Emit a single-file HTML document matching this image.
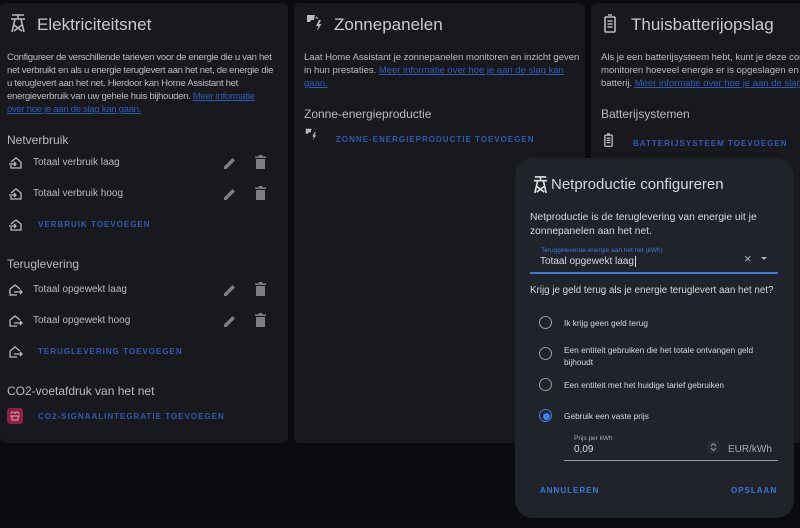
<!DOCTYPE html>
<html><head><meta charset="utf-8">
<style>
*{margin:0;padding:0;box-sizing:border-box}
body{width:800px;height:528px;background:#0a0b0e;font-family:"Liberation Sans",sans-serif;position:relative;overflow:hidden;color:#c4c6ca}
.card{position:absolute;top:3px;height:440px;background:#18191d;border-radius:6px;overflow:hidden}
.abs{position:absolute}
.h{font-size:17px;color:#c9cbcf;white-space:nowrap}
.p{font-size:9.6px;line-height:13px;color:#b9bbbf;letter-spacing:-0.05px}
a{color:#2f5ab8;text-decoration:underline}
.sec{font-size:12px;color:#b9bbbf;white-space:nowrap}
.item{font-size:10px;color:#b9bbbf;white-space:nowrap}
.btn{font-size:8px;font-weight:bold;letter-spacing:1px;color:#2f5ab8;white-space:nowrap}
svg{position:absolute}
.dlg{position:absolute;left:515px;top:158px;width:279px;height:360px;background:#202329;border-radius:18px}
.d{color:#d6d8dc}
.radio{position:absolute;left:24px;width:13px;height:13px;border:1.5px solid #9a9ca0;border-radius:50%}
</style></head><body>

<!-- Card 1 -->
<div class="card" style="left:0;width:288px">
  <svg style="left:9px;top:10px" width="18" height="20" viewBox="0 0 18 20" fill="none" stroke="#b9bbbf" stroke-width="1.6"><path d="M3 2h12M2 6h14M9 2v4M6 6L3 19M12 6l3 13M5 12l8 6M13 12l-8 6"/></svg>
  <div class="abs h" style="left:37px;top:12px">Elektriciteitsnet</div>
  <div class="abs p" style="left:7px;top:48px;width:285px;white-space:nowrap;letter-spacing:-0.32px">Configureer de verschillende tarieven voor de energie die u van het<br>net verbruikt en als u energie teruglevert aan het net, de energie die<br>u teruglevert aan het net. Hierdoor kan Home Assistant het<br>energieverbruik van uw gehele huis bijhouden. <a>Meer informatie</a><br><a>over hoe je aan de slag kan gaan.</a></div>
  <div class="abs sec" style="left:7px;top:130px">Netverbruik</div>
</div>
<!-- Card 2 -->
<div class="card" style="left:294px;width:291px">
  <div class="abs h" style="left:40px;top:12px">Zonnepanelen</div>
  <div class="abs p" style="left:10px;top:48px;width:278px">Laat Home Assistant je zonnepanelen monitoren en inzicht geven in hun prestaties. <a>Meer informatie over hoe je aan de slag kan gaan.</a></div>
  <div class="abs sec" style="left:10px;top:104px">Zonne-energieproductie</div>
  <div class="abs btn" style="left:42px;top:132px">ZONNE-ENERGIEPRODUCTIE TOEVOEGEN</div>
</div>
<!-- Card 3 -->
<div class="card" style="left:591px;width:209px;border-radius:6px 0 0 6px">
  <div class="abs h" style="left:40px;top:12px">Thuisbatterijopslag</div>
  <div class="abs p" style="left:10px;top:48px;width:260px;white-space:nowrap">Als je een batterijsysteem hebt, kunt je deze configureren om te<br>monitoren hoeveel energie er is opgeslagen en gebruikt uit je<br>batterij. <a>Meer informatie over hoe je aan de slag kan gaan.</a></div>
  <div class="abs sec" style="left:10px;top:104px">Batterijsystemen</div>
  <div class="abs btn" style="left:42px;top:136px">BATTERIJSYSTEEM TOEVOEGEN</div>
</div>

<!-- solar icons -->
<svg style="left:306px;top:14px" width="18" height="18" viewBox="0 0 18 18"><path d="M1 1h8l-1 5H5l-1 2H1z" fill="#b9bbbf"/><path d="M10 3l1.5 1.5" stroke="#b9bbbf" stroke-width="1.4"/><path d="M13 6l-3 6h2.5l-1.5 5 4.5-7h-2.5l2-4z" fill="#b9bbbf"/></svg>
<svg style="left:305px;top:128px" width="13" height="13" viewBox="0 0 18 18"><path d="M1 1h8l-1 5H5l-1 2H1z" fill="#b9bbbf"/><path d="M13 6l-3 6h2.5l-1.5 5 4.5-7h-2.5l2-4z" fill="#b9bbbf"/></svg>
<!-- battery icons -->
<svg style="left:604px;top:14px" width="12" height="19" viewBox="0 0 12 19" fill="none" stroke="#b9bbbf" stroke-width="1.6"><rect x="1" y="3" width="10" height="15" rx="1"/><path d="M4 1h4M3.5 7h5M3.5 10h5M3.5 13h5"/></svg>
<svg style="left:604px;top:133px" width="9" height="14" viewBox="0 0 12 19" fill="none" stroke="#b9bbbf" stroke-width="1.8"><rect x="1" y="3" width="10" height="15" rx="1"/><path d="M4 1h4M3.5 7h5M3.5 10h5M3.5 13h5"/></svg>

<!-- Netverbruik items -->
<svg style="left:8px;top:156px" width="14" height="14" viewBox="0 0 14 14" fill="none" stroke="#b9bbbf" stroke-width="1.3"><path d="M3 6L8 2l5 4v6H3V9M1 8h7M6 6l2 2-2 2"/></svg>
<div class="abs item" style="left:33px;top:157px">Totaal verbruik laag</div>
<svg style="left:8px;top:187px" width="14" height="14" viewBox="0 0 14 14" fill="none" stroke="#b9bbbf" stroke-width="1.3"><path d="M3 6L8 2l5 4v6H3V9M1 8h7M6 6l2 2-2 2"/></svg>
<div class="abs item" style="left:33px;top:188px">Totaal verbruik hoog</div>
<svg style="left:8px;top:218px" width="14" height="14" viewBox="0 0 14 14" fill="none" stroke="#b9bbbf" stroke-width="1.3"><path d="M3 6L8 2l5 4v6H3V9M1 8h7M6 6l2 2-2 2"/></svg>
<div class="abs btn" style="left:38px;top:220px">VERBRUIK TOEVOEGEN</div>

<div class="abs sec" style="left:7px;top:257px">Teruglevering</div>
<svg style="left:8px;top:283px" width="15" height="14" viewBox="0 0 15 14" fill="none" stroke="#b9bbbf" stroke-width="1.3"><path d="M2 6l5-4 5 4M2 6v6h7M6 9h8M12 7l2 2-2 2"/></svg>
<div class="abs item" style="left:33px;top:284px">Totaal opgewekt laag</div>
<svg style="left:8px;top:314px" width="15" height="14" viewBox="0 0 15 14" fill="none" stroke="#b9bbbf" stroke-width="1.3"><path d="M2 6l5-4 5 4M2 6v6h7M6 9h8M12 7l2 2-2 2"/></svg>
<div class="abs item" style="left:33px;top:315px">Totaal opgewekt hoog</div>
<svg style="left:8px;top:345px" width="15" height="14" viewBox="0 0 15 14" fill="none" stroke="#b9bbbf" stroke-width="1.3"><path d="M2 6l5-4 5 4M2 6v6h7M6 9h8M12 7l2 2-2 2"/></svg>
<div class="abs btn" style="left:38px;top:347px">TERUGLEVERING TOEVOEGEN</div>

<div class="abs sec" style="left:7px;top:384px">CO2-voetafdruk van het net</div>
<div class="abs" style="left:7px;top:408px;width:16px;height:16px;border-radius:3px;background:#8a2044"></div>
<svg style="left:9px;top:411px" width="12" height="10" viewBox="0 0 12 10" fill="none" stroke="#e8a0b0" stroke-width="1"><path d="M2 3a2 2 0 0 1 4 0a2 2 0 0 1 4 0M1 5h10M3 5v4h6V5"/></svg>
<div class="abs btn" style="left:38px;top:412px">CO2-SIGNAALINTEGRATIE TOEVOEGEN</div>

<!-- edit/delete icons -->
<svg style="left:223px;top:156px" width="14" height="14" viewBox="0 0 14 14"><path d="M1 10.5L9.5 2 12 4.5 3.5 13H1z" fill="#7c7e82"/></svg>
<svg style="left:255px;top:155px" width="11" height="14" viewBox="0 0 11 14"><path d="M0 1.5h11V3H0zM3.5 0h4v2h-4zM1 4h9v10H1z" fill="#7c7e82"/></svg>
<svg style="left:223px;top:187px" width="14" height="14" viewBox="0 0 14 14"><path d="M1 10.5L9.5 2 12 4.5 3.5 13H1z" fill="#7c7e82"/></svg>
<svg style="left:255px;top:186px" width="11" height="14" viewBox="0 0 11 14"><path d="M0 1.5h11V3H0zM3.5 0h4v2h-4zM1 4h9v10H1z" fill="#7c7e82"/></svg>
<svg style="left:223px;top:283px" width="14" height="14" viewBox="0 0 14 14"><path d="M1 10.5L9.5 2 12 4.5 3.5 13H1z" fill="#7c7e82"/></svg>
<svg style="left:255px;top:282px" width="11" height="14" viewBox="0 0 11 14"><path d="M0 1.5h11V3H0zM3.5 0h4v2h-4zM1 4h9v10H1z" fill="#7c7e82"/></svg>
<svg style="left:223px;top:314px" width="14" height="14" viewBox="0 0 14 14"><path d="M1 10.5L9.5 2 12 4.5 3.5 13H1z" fill="#7c7e82"/></svg>
<svg style="left:255px;top:313px" width="11" height="14" viewBox="0 0 11 14"><path d="M0 1.5h11V3H0zM3.5 0h4v2h-4zM1 4h9v10H1z" fill="#7c7e82"/></svg>

<!-- Dialog -->
<div class="dlg">
  <svg style="left:17px;top:17px" width="17" height="19" viewBox="0 0 18 20" fill="none" stroke="#e0e2e6" stroke-width="1.7"><path d="M3 2h12M2 6h14M9 2v4M6 6L3 19M12 6l3 13M5 12l8 6M13 12l-8 6"/></svg>
  <div class="abs d" style="left:36px;top:18px;font-size:15px;white-space:nowrap">Netproductie configureren</div>
  <div class="abs d" style="left:15px;top:53px;font-size:10.3px;line-height:14px;width:250px">Netproductie is de teruglevering van energie uit je zonnepanelen aan het net.</div>
  <div class="abs" style="left:26px;top:89px;font-size:6.5px;color:#3b78e0;white-space:nowrap">Teruggeleverde energie aan het net (kWh)</div>
  <div class="abs d" style="left:25px;top:98px;font-size:10px;white-space:nowrap">Totaal opgewekt laag<span style="border-left:1px solid #ddd;margin-left:1px"></span></div>
  <div class="abs" style="left:229px;top:93px;font-size:13px;color:#b0b2b6">×</div>
  <div class="abs" style="left:246px;top:99px;width:0;height:0;border-left:3px solid transparent;border-right:3px solid transparent;border-top:3px solid #b0b2b6"></div>
  <div class="abs" style="left:15px;top:114px;width:248px;height:2px;background:#3b78e0"></div>
  <div class="abs d" style="left:15px;top:127px;font-size:9.8px;white-space:nowrap">Krijg je geld terug als je energie teruglevert aan het net?</div>

  <div class="radio" style="top:158px"></div>
  <div class="abs d" style="left:49px;top:160px;font-size:8.3px">Ik krijg geen geld terug</div>
  <div class="radio" style="top:189px"></div>
  <div class="abs d" style="left:49px;top:186px;font-size:8.3px;line-height:12px;width:205px">Een entiteit gebruiken die het totale ontvangen geld bijhoudt</div>
  <div class="radio" style="top:220px"></div>
  <div class="abs d" style="left:49px;top:222px;font-size:8.3px;white-space:nowrap">Een entiteit met het huidige tarief gebruiken</div>
  <div class="radio" style="top:251px;border-color:#3b82f0"></div>
  <div class="abs" style="left:28px;top:255px;width:7px;height:7px;border-radius:50%;background:#3b82f0"></div>
  <div class="abs d" style="left:49px;top:253px;font-size:8.3px;white-space:nowrap">Gebruik een vaste prijs</div>

  <div class="abs" style="left:59px;top:277px;font-size:6.5px;color:#a8aaae">Prijs per kWh</div>
  <div class="abs d" style="left:59px;top:286px;font-size:10px">0,09</div>
  <div class="abs" style="left:193px;top:283px;width:11px;height:12px;background:#2a2d33"></div>
  <svg style="left:195px;top:284px" width="7" height="10" viewBox="0 0 7 10" fill="none" stroke="#9a9ca0" stroke-width="1"><path d="M1 4l2.5-2.5L6 4M1 6l2.5 2.5L6 6"/></svg>
  <div class="abs" style="left:213px;top:286px;font-size:10px;color:#a8aaae">EUR/kWh</div>
  <div class="abs" style="left:49px;top:302px;width:214px;height:1px;background:#9a9ca0"></div>

  <div class="abs" style="left:25px;top:328px;font-size:8px;font-weight:bold;letter-spacing:1px;color:#3b78e0">ANNULEREN</div>
  <div class="abs" style="left:216px;top:328px;font-size:8px;font-weight:bold;letter-spacing:1px;color:#3b78e0">OPSLAAN</div>
</div>
</body></html>
